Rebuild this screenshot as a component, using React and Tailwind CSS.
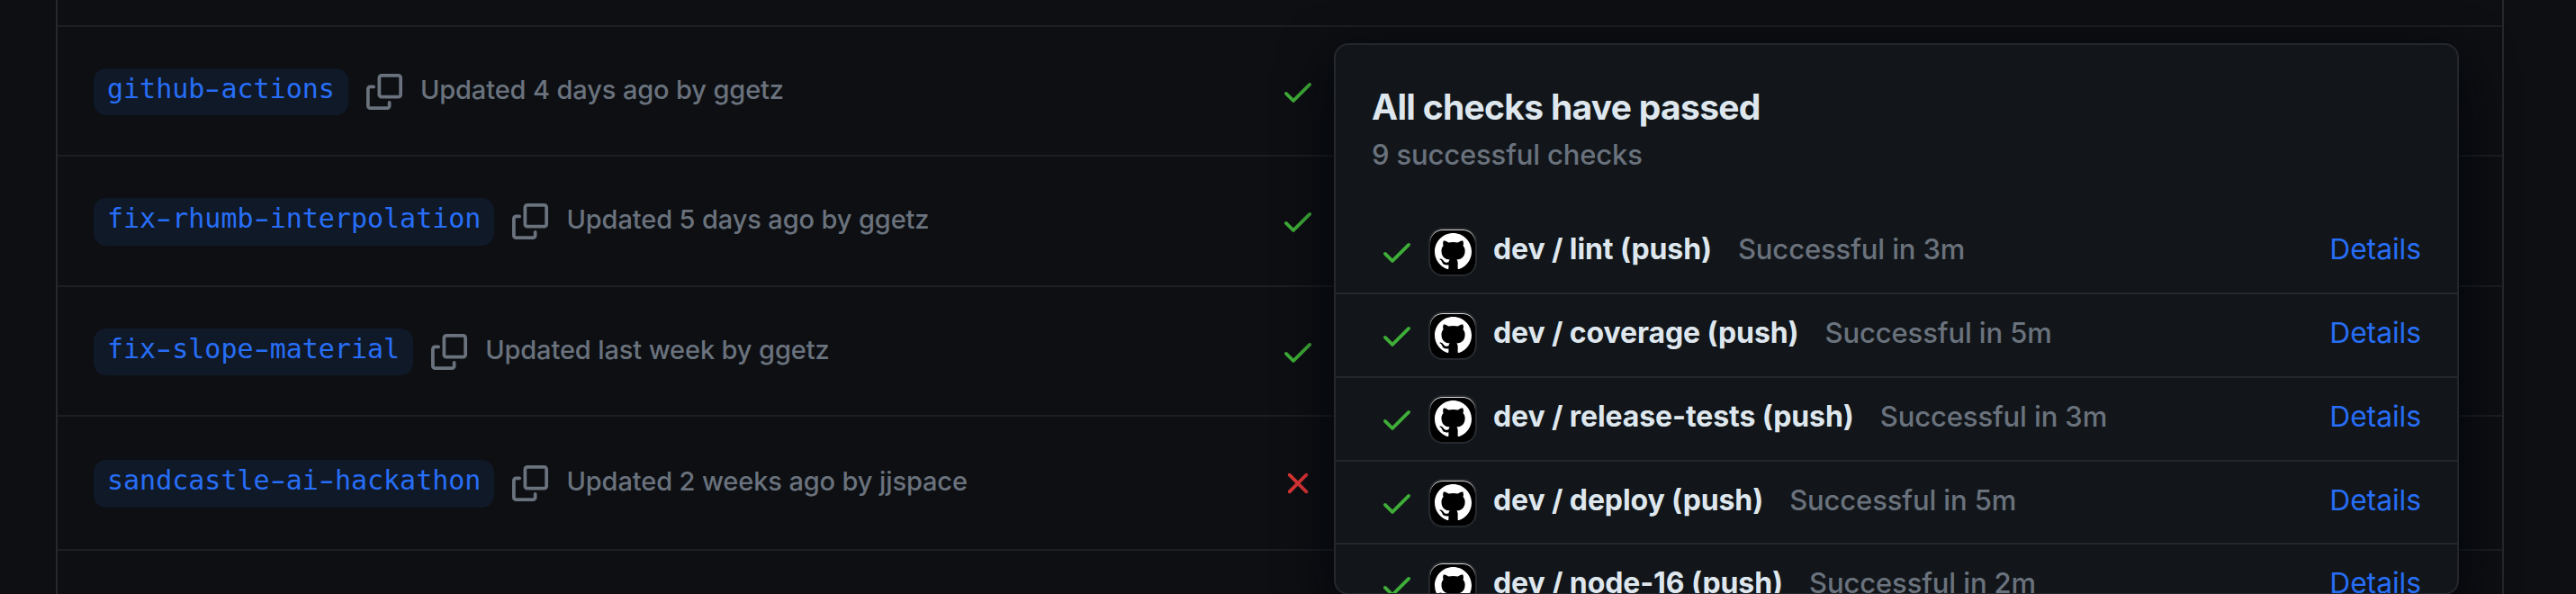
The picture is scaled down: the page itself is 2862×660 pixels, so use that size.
import React from "react";

const branches = [
  { name: "github-actions", updated: "Updated 4 days ago by ggetz", ok: true, row: "h-[144px] pt-[46px]", pill: "h-[52px] pb-[6px]" },
  { name: "fix-rhumb-interpolation", updated: "Updated 5 days ago by ggetz", ok: true, row: "h-[145px] pt-[46px]", pill: "h-[53px] -mb-px pb-[8px]" },
  { name: "fix-slope-material", updated: "Updated last week by ggetz", ok: true, row: "h-[144px] pt-[46px]", pill: "h-[52px] pb-[6px]" },
  { name: "sandcastle-ai-hackathon", updated: "Updated 2 weeks ago by jjspace", ok: false, row: "h-[149px] pt-[48px]", pill: "h-[53px] -mb-px pb-[8px]" },
];

const checks = [
  { name: "dev / lint (push)", result: "Successful in 3m", row: "h-[93px]" },
  { name: "dev / coverage (push)", result: "Successful in 5m", row: "h-[93px]" },
  { name: "dev / release-tests (push)", result: "Successful in 3m", row: "h-[93px]" },
  { name: "dev / deploy (push)", result: "Successful in 5m", row: "h-[92px] pt-px" },
  { name: "dev / node-16 (push)", result: "Successful in 2m", row: "h-[93px]" },
];

function CheckIcon() {
  return (
    <svg viewBox="0 0 16 16" className="size-10 shrink-0 fill-[#3fae38]">
      <path d="M13.78 4.22a.75.75 0 0 1 0 1.06l-7.25 7.25a.75.75 0 0 1-1.06 0L2.22 9.28a.751.751 0 0 1 .018-1.042.751.751 0 0 1 1.042-.018L6 10.94l6.72-6.72a.75.75 0 0 1 1.06 0Z" />
    </svg>
  );
}

function CrossIcon() {
  return (
    <svg viewBox="0 0 16 16" className="size-10 shrink-0 fill-[#e03535]">
      <path d="M3.72 3.72a.75.75 0 0 1 1.06 0L8 6.94l3.22-3.22a.749.749 0 0 1 1.275.326.749.749 0 0 1-.215.734L9.06 8l3.22 3.22a.749.749 0 0 1-.326 1.275.749.749 0 0 1-.734-.215L8 9.06l-3.22 3.22a.751.751 0 0 1-1.042-.018.751.751 0 0 1-.018-1.042L6.94 8 3.72 4.78a.75.75 0 0 1 0-1.06Z" />
    </svg>
  );
}

function CopyIcon() {
  return (
    <svg viewBox="0 0 16 16" className="size-10 shrink-0 fill-[#6a727d]">
      <path d="M0 6.75C0 5.784.784 5 1.75 5h1.5a.75.75 0 0 1 0 1.5h-1.5a.25.25 0 0 0-.25.25v7.5c0 .138.112.25.25.25h7.5a.25.25 0 0 0 .25-.25v-1.5a.75.75 0 0 1 1.5 0v1.5A1.75 1.75 0 0 1 9.25 16h-7.5A1.75 1.75 0 0 1 0 14.25Z" />
      <path d="M5 1.75C5 .784 5.784 0 6.75 0h7.5C15.216 0 16 .784 16 1.75v7.5A1.75 1.75 0 0 1 14.25 11h-7.5A1.75 1.75 0 0 1 5 9.25Zm1.75-.25a.25.25 0 0 0-.25.25v7.5c0 .138.112.25.25.25h7.5a.25.25 0 0 0 .25-.25v-7.5a.25.25 0 0 0-.25-.25Z" />
    </svg>
  );
}

function Avatar() {
  return (
    <span className="flex size-[50px] shrink-0 items-center justify-center rounded-[14px] bg-black shadow-[0_0_0_2px_#25282d,inset_0_1px_0_#d8d8d8]">
      <svg viewBox="0 0 16 16" className="size-[41px] fill-white">
        <path d="M8 0c4.42 0 8 3.58 8 8a8.013 8.013 0 0 1-5.45 7.59c-.4.08-.55-.17-.55-.38 0-.27.01-1.13.01-2.2 0-.75-.25-1.23-.54-1.48 1.78-.2 3.65-.88 3.65-3.95 0-.88-.31-1.59-.82-2.15.08-.2.36-1.02-.08-2.12 0 0-.67-.22-2.2.82-.64-.18-1.32-.27-2-.27-.68 0-1.36.09-2 .27-1.53-1.03-2.2-.82-2.2-.82-.44 1.1-.16 1.92-.08 2.12-.51.56-.82 1.28-.82 2.15 0 3.06 1.86 3.75 3.64 3.95-.23.2-.44.55-.51 1.07-.46.21-1.61.55-2.33-.66-.15-.24-.6-.83-1.23-.82-.67.01-.27.38.01.53.34.19.73.9.82 1.13.16.45.68 1.31 2.69.94 0 .67.01 1.3.01 1.49 0 .21-.15.45-.55.38A7.995 7.995 0 0 1 0 8c0-4.42 3.58-8 8-8Z" />
      </svg>
    </span>
  );
}

/* Branch names are set with wide hyphens that nearly fill their cell. */
function BranchName({ name }) {
  return (
    <span>
      {name.split(/(-)/).map((part, i) =>
        part === "-" ? (
          <span key={i} className="inline-block scale-x-[1.6]">-</span>
        ) : (
          part
        )
      )}
    </span>
  );
}

function BranchRow({ branch }) {
  return (
    <div className={`flex items-start border-b-2 border-[#1b1e22] pl-10 ${branch.row}`}>
      <div className="flex w-[1318px] items-center">
        <a className={`flex items-center rounded-[14px] bg-[#101928] px-[15px] font-['DejaVu_Sans_Mono',monospace] text-[30px] leading-none text-[#276ef7] ${branch.pill}`}>
          <BranchName name={branch.name} />
        </a>
        <span className="ml-5 flex">
          <CopyIcon />
        </span>
        <span className="ml-5 pb-[5px] text-[29px] leading-none font-[450] tracking-[-0.12px] text-[#6a727d]">{branch.updated}</span>
      </div>
      <span className="mt-[6px] flex">{branch.ok ? <CheckIcon /> : <CrossIcon />}</span>
    </div>
  );
}

function CheckRow({ check }) {
  return (
    <div className={`flex shrink-0 items-center border-b-2 border-[#24282d] pr-10 pl-12 leading-none ${check.row}`}>
      <CheckIcon />
      <span className="ml-[17px] flex">
        <Avatar />
      </span>
      <span className="ml-5 pb-[6px] text-[32px] font-bold tracking-[-0.1px] text-[#dfe7ee]">{check.name}</span>
      <span className="ml-[29px] pb-[6px] text-[31px] font-[450] tracking-[-0.12px] text-[#6a727d]">{check.result}</span>
      <a className="ml-auto pb-[6px] text-[31.7px] text-[#276ef7]">Details</a>
    </div>
  );
}

export default function App() {
  return (
    <div className="relative h-[660px] w-[2862px] overflow-hidden bg-[#0d0f13] px-[62px] font-[Inter,sans-serif] whitespace-nowrap">
      <div className="h-full w-[2720px] border-x-2 border-[#25282d]">
        <div className="h-[30px] border-b-2 border-[#1b1e22]" />
        {branches.map((b) => (
          <BranchRow key={b.name} branch={b} />
        ))}
      </div>
      <div className="absolute top-12 left-[1482px] flex h-[613px] w-[1250px] flex-col overflow-hidden rounded-[16px] border-2 border-[#24282d] bg-[#12161a] shadow-[0_20px_60px_#010409]">
        <div className="flex h-[184px] shrink-0 flex-col px-10 pt-[47px]">
          <h3 className="text-[39px] leading-[44px] font-bold tracking-[-0.7px] text-[#dfe7ee]">All checks have passed</h3>
          <p className="mt-[11px] text-[31px] leading-[40px] font-[450] tracking-[-0.15px] text-[#6a727d]">9 successful checks</p>
        </div>
        {checks.map((c) => (
          <CheckRow key={c.name} check={c} />
        ))}
      </div>
    </div>
  );
}
